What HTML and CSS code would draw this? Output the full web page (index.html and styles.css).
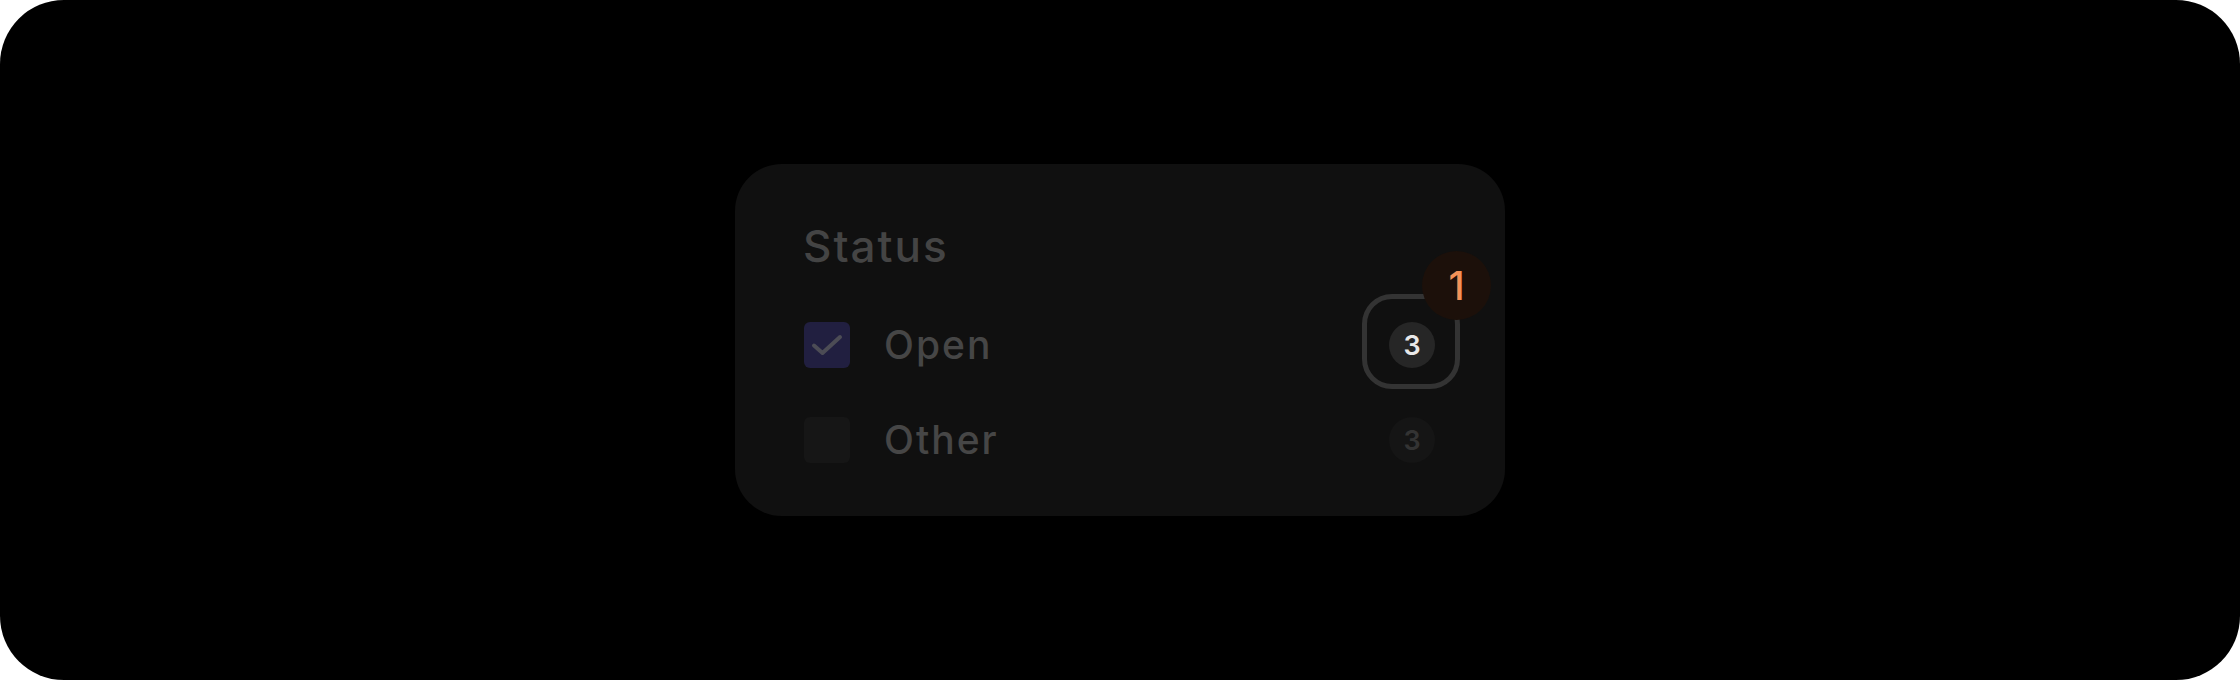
FILE: index.html
```html
<!DOCTYPE html>
<html lang="en">
<head>
<meta charset="utf-8">
<title>Status filter</title>
<link rel="stylesheet" href="styles.css">
</head>
<body>
<div class="frame">
  <div class="card">
    <div class="title">Status</div>
    <div class="row">
      <span class="check checked">
        <svg viewBox="0 0 46 46" width="46" height="46"><path d="M10 23.5 L18.5 31 L36 15" fill="none" stroke="#4c4c55" stroke-width="4" stroke-linecap="round" stroke-linejoin="round"/></svg>
      </span>
      <span class="label">Open</span>
      <span class="count active">3
        <span class="ring"></span>
        <span class="badge">1</span>
      </span>
    </div>
    <div class="row">
      <span class="check"></span>
      <span class="label">Other</span>
      <span class="count dim">3</span>
    </div>
  </div>
</div>
</body>
</html>
```

FILE: styles.css
```css
html, body {
  margin: 0;
  padding: 0;
  background: #ffffff;
}
.frame {
  width: 2240px;
  height: 680px;
  background: #000000;
  border-radius: 64px;
  display: flex;
  align-items: center;
  justify-content: center;
  font-family: Inter, "Noto Sans", sans-serif;
}
.card {
  width: 770px;
  box-sizing: border-box;
  padding: 60px 70px 53px 69px;
  background: #101010;
  border-radius: 47px;
  display: flex;
  flex-direction: column;
  gap: 49px;
}
.title {
  font-size: 44px;
  line-height: 44px;
  font-weight: 500;
  color: #444444;
  letter-spacing: 2px;
  margin-left: -1px;
  margin-bottom: 5px;
}
.row {
  display: flex;
  align-items: center;
  height: 46px;
}
.check {
  width: 46px;
  height: 46px;
  border-radius: 6px;
  background: #161616;
  flex: none;
  display: flex;
}
.check.checked {
  background: #211f40;
}
.label {
  margin-left: 34px;
  font-size: 39px;
  line-height: 46px;
  font-weight: 500;
  color: #464646;
  letter-spacing: 2px;
}
.count {
  margin-left: auto;
  width: 46px;
  height: 46px;
  border-radius: 50%;
  display: flex;
  align-items: center;
  justify-content: center;
  font-size: 27px;
  font-weight: 600;
  position: relative;
}
.count.active {
  background: #262626;
  color: #e8e8e8;
}
.count.dim {
  background: #151515;
  color: #333333;
}
.ring {
  position: absolute;
  left: -27px;
  top: -28px;
  width: 98px;
  height: 95px;
  box-sizing: border-box;
  border: 5px solid #333333;
  border-radius: 30px;
}
.badge {
  position: absolute;
  left: 33px;
  top: -71px;
  width: 69px;
  height: 69px;
  border-radius: 50%;
  background: #1c100a;
  color: #f39258;
  font-size: 39px;
  font-weight: 500;
  display: flex;
  align-items: center;
  justify-content: center;
}
```
